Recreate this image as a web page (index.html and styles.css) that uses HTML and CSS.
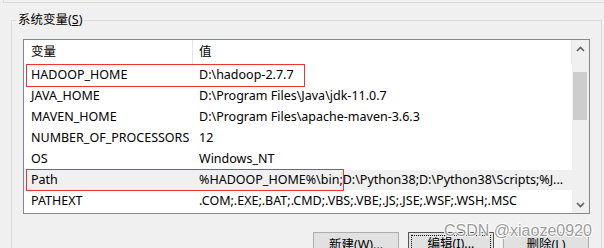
FILE: index.html
```html
<!DOCTYPE html>
<html lang="zh-CN">
<head>
<meta charset="utf-8">
<title>系统变量</title>
<link rel="stylesheet" href="styles.css">
</head>
<body>
<div class="page">
  <div class="prev"></div>
  <fieldset class="group">
    <legend class="legend">系统变量(<u>S</u>)</legend>
    <div class="listview">
      <div class="list">
        <div class="header">
          <div class="hcell c1">变量</div>
          <div class="hcell c2">值</div>
        </div>
        <div class="row">
          <div class="cell c1">HADOOP_HOME</div>
          <div class="cell c2">D:\hadoop-2.7.7</div>
          <span class="mark mark1"></span>
        </div>
        <div class="row">
          <div class="cell c1">JAVA_HOME</div>
          <div class="cell c2">D:\Program Files\Java\jdk-11.0.7</div>
        </div>
        <div class="row">
          <div class="cell c1">MAVEN_HOME</div>
          <div class="cell c2">D:\Program Files\apache-maven-3.6.3</div>
        </div>
        <div class="row">
          <div class="cell c1">NUMBER_OF_PROCESSORS</div>
          <div class="cell c2">12</div>
        </div>
        <div class="row">
          <div class="cell c1">OS</div>
          <div class="cell c2">Windows_NT</div>
        </div>
        <div class="row selected">
          <div class="cell c1">Path</div>
          <div class="cell c2">%HADOOP_HOME%\bin;D:\Python38;D:\Python38\Scripts;%J...</div>
          <span class="mark mark2"></span>
        </div>
        <div class="row">
          <div class="cell c1">PATHEXT</div>
          <div class="cell c2">.COM;.EXE;.BAT;.CMD;.VBS;.VBE;.JS;.JSE;.WSF;.WSH;.MSC</div>
        </div>
      </div>
      <div class="scrollbar">
        <div class="sbtn">
          <svg width="9" height="6" viewBox="0 0 9 6"><path d="M1 5 L4.5 1.5 L8 5" fill="none" stroke="#606060" stroke-width="1.6"/></svg>
        </div>
        <div class="track">
          <div class="thumb"></div>
        </div>
        <div class="sbtn">
          <svg width="9" height="6" viewBox="0 0 9 6"><path d="M1 1 L4.5 4.5 L8 1" fill="none" stroke="#606060" stroke-width="1.6"/></svg>
        </div>
      </div>
    </div>
    <div class="buttons">
      <button class="btn">新建(<u>W</u>)...</button>
      <button class="btn default"><span class="focus">编辑(<u>I</u>)...</span></button>
      <button class="btn">删除(<u>L</u>)</button>
    </div>
  </fieldset>
  <div class="watermark">CSDN @xiaoze0920</div>
</div>
</body>
</html>
```
FILE: styles.css
```css
html, body {
  margin: 0;
  padding: 0;
  background: #f0f0f0;
}
body {
  width: 604px;
  height: 248px;
  overflow: hidden;
  font-family: "Noto Sans", "Noto Sans CJK SC", sans-serif;
  font-size: 12.5px;
  color: #000;
}
.page {
  position: relative;
  width: 604px;
  height: 248px;
  overflow: hidden;
}
.prev {
  margin-left: 3px;
  height: 2px;
  border-left: 1px solid #dcdcdc;
  border-bottom: 1px solid #dcdcdc;
}
.group {
  margin: 9px 0 0 11px;
  width: 591px;
  box-sizing: border-box;
  padding: 0;
  border: 1px solid #dcdcdc;
  min-width: 0;
}
.legend {
  margin-left: 4px;
  padding: 0 2px;
  line-height: 16px;
  height: 16px;
  font-size: 12.5px;
}
.legend u, .btn u {
  text-decoration-thickness: 1px;
  text-underline-offset: 1px;
}
.listview {
  margin: 11px 0 0 11px;
  width: 567px;
  height: 175px;
  box-sizing: border-box;
  border: 1px solid #828790;
  background: #fff;
  display: flex;
}
.list {
  width: 548px;
  display: flex;
  flex-direction: column;
}
.header {
  display: flex;
  height: 24px;
  flex: none;
}
.hcell {
  box-sizing: border-box;
  line-height: 24px;
  border-right: 1px solid #e5e5e5;
  white-space: nowrap;
}
.c1 {
  width: 169px;
  padding-left: 7px;
  box-sizing: border-box;
  flex: none;
}
.c2 {
  flex: 1;
  padding-left: 6px;
  box-sizing: border-box;
}
.row {
  position: relative;
  display: flex;
  height: 21px;
  flex: none;
}
.cell {
  line-height: 21px;
  white-space: nowrap;
  overflow: hidden;
}
.row.selected {
  background: #f0f0f0;
  margin-top: 1px;
  height: 20px;
}
.row.selected .cell {
  line-height: 20px;
}
.mark {
  position: absolute;
  border: 1px solid #ee3333;
  box-sizing: border-box;
  pointer-events: none;
}
.mark1 {
  left: 2px;
  top: 0;
  width: 279px;
  height: 23px;
}
.mark2 {
  left: 2px;
  top: -1px;
  width: 318px;
  height: 22px;
}
.scrollbar {
  width: 17px;
  background: #f0f0f0;
  display: flex;
  flex-direction: column;
}
.sbtn {
  height: 17px;
  flex: none;
  display: flex;
  align-items: center;
  justify-content: center;
}
.sbtn svg {
  display: block;
}
.track {
  flex: 1;
  padding: 15px 2px 0 1px;
}
.thumb {
  height: 48px;
  background: #cdcdcd;
}
.buttons {
  display: flex;
  justify-content: flex-end;
  gap: 9px;
  margin: 18px 12px 0 0;
}
.btn {
  width: 86px;
  height: 23px;
  padding: 0;
  font: inherit;
  color: #000;
  background: #e1e1e1;
  border: 1px solid #adadad;
  box-sizing: border-box;
}
.btn.default {
  border-color: #555;
  padding: 2px;
}
.btn .focus {
  display: block;
  height: 100%;
  box-sizing: border-box;
  border: 1px dotted #000;
  line-height: 15px;
}
.watermark {
  position: absolute;
  left: 444px;
  top: 222px;
  font-family: "Liberation Sans", sans-serif;
  font-size: 16px;
  color: #9c9c9c;
  text-shadow: 1px 0 0 #fff, -1px 0 0 #fff, 0 1px 0 #fff, 0 -1px 0 #fff;
  white-space: nowrap;
}
```
